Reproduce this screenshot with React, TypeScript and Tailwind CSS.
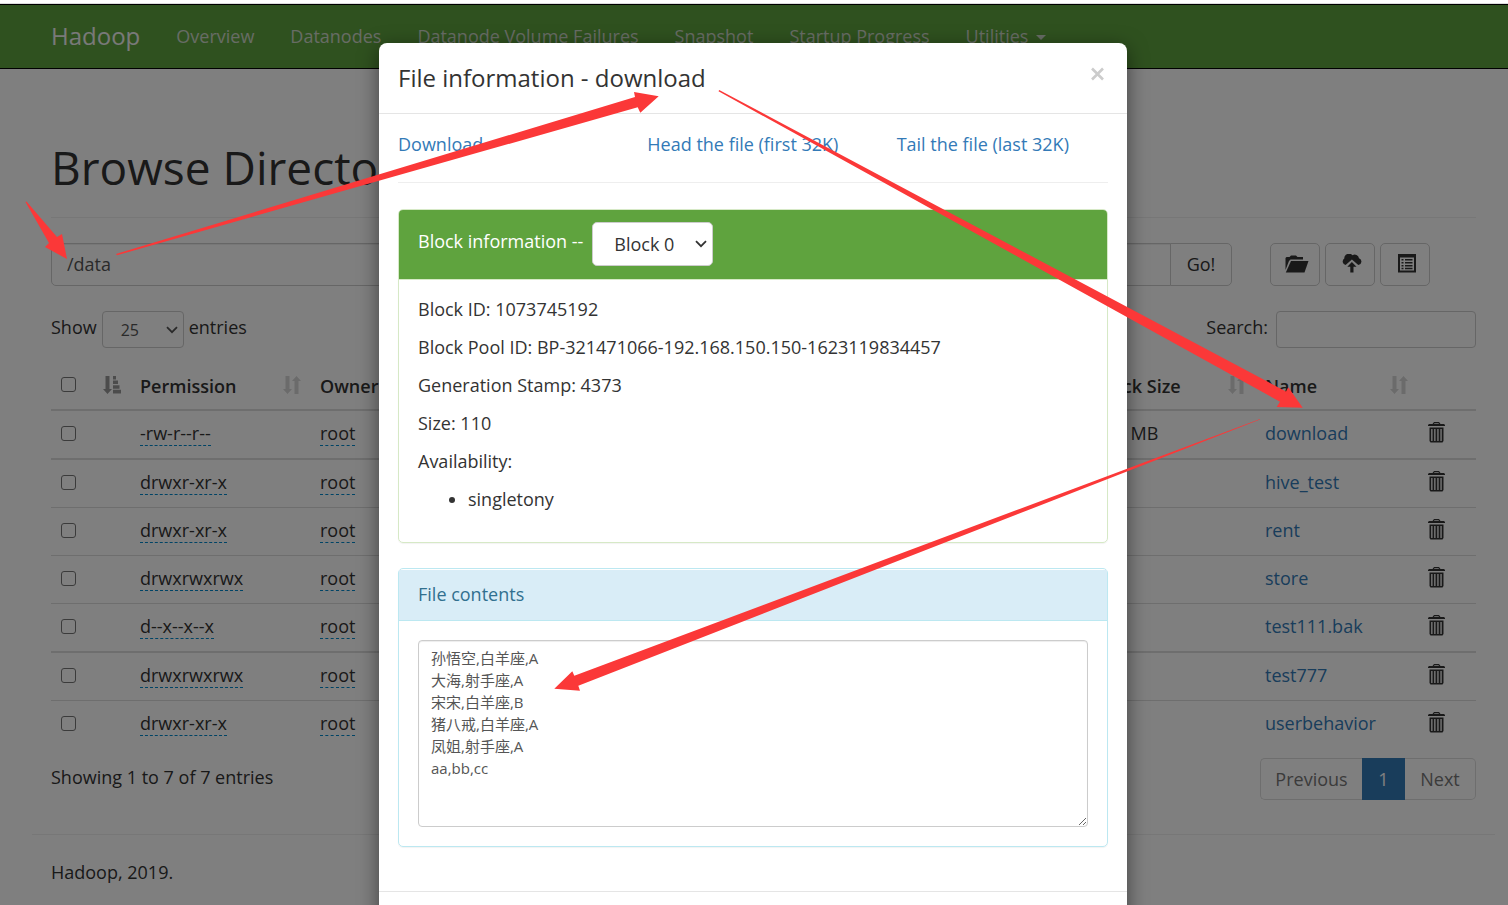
import { useState } from 'react'

type Entry = {
    permission: string
    blockSize: string
    name: string
}

const navItems = ['Overview', 'Datanodes', 'Datanode Volume Failures', 'Snapshot', 'Startup Progress']

const entries: Entry[] = [
    { permission: '-rw-r--r--', blockSize: '128 MB', name: 'download' },
    { permission: 'drwxr-xr-x', blockSize: '', name: 'hive_test' },
    { permission: 'drwxr-xr-x', blockSize: '', name: 'rent' },
    { permission: 'drwxrwxrwx', blockSize: '', name: 'store' },
    { permission: 'd--x--x--x', blockSize: '', name: 'test111.bak' },
    { permission: 'drwxrwxrwx', blockSize: '', name: 'test777' },
    { permission: 'drwxr-xr-x', blockSize: '', name: 'userbehavior' },
]

const fileContents = `孙悟空,白羊座,A
大海,射手座,A
宋宋,白羊座,B
猪八戒,白羊座,A
凤姐,射手座,A
aa,bb,cc`

function SortIcon() {
    return (
        <svg width="18" height="18" viewBox="0 0 18 18" fill="currentColor" aria-hidden="true">
            <path d="M2.500 0h4v13H9l-4.500 5L0 13h2.500z" />
            <path d="M11.500 18h4V5H18l-4.500-5L9 5h2.500z" />
        </svg>
    )
}

function SortedIcon() {
    return (
        <svg width="18" height="18" viewBox="0 0 18 18" fill="currentColor" aria-hidden="true">
            <path d="M2.500 0h4v13H9l-4.500 5L0 13h2.500z" />
            <path d="M10 0h3v3.500h-3zM10 4.500h5V8h-5zM10 9.200h6.500v3.500H10zM10 13.800h8v3.700h-8z" />
        </svg>
    )
}

function TrashIcon() {
    return (
        <svg width="17" height="21" viewBox="0 0 17 21" fill="currentColor" aria-hidden="true">
            <path
                fillRule="evenodd"
                d="M6 0h5l1.500 2H16l1 1v1H0V3l1-1h3.500zM6.500 1.200L6 2h5l-.5-.8zM1.500 5.500h14V19l-1 1.500h-12l-1-1.500zM3.200 7v12h1.300V7zM6.200 7v12h1.300V7zM9.300 7v12h1.300V7zM12.400 7v12h1.300V7z"
            />
        </svg>
    )
}

function FolderOpenIcon() {
    return (
        <svg width="24" height="18" viewBox="0 0 24 18" fill="currentColor" aria-hidden="true">
            <path d="M.5 15V3l1-1h3L6 .5h5L12.500 2H18v2.500H5.500L4 6z" />
            <path d="M6 6h17.500l-4 11.500H.8z" />
        </svg>
    )
}

function CloudUploadIcon() {
    return (
        <svg width="20" height="19" viewBox="0 0 20 19" fill="currentColor" aria-hidden="true">
            <path d="M3.600 11A3.500 3.500 0 0 1 2.300 4.600 4.700 4.700 0 0 1 10.500 1.300a4.300 4.300 0 0 1 6.500 2.900A3.500 3.500 0 0 1 16.300 11L9.900 5.400z" />
            <path d="M9.900 8l4.600 4.800h-3v5.700H8.300v-5.700h-3z" />
        </svg>
    )
}

function ListAltIcon() {
    return (
        <svg width="18" height="19" viewBox="0 0 18 19" fill="currentColor" aria-hidden="true">
            <path
                fillRule="evenodd"
                d="M0 0h18v18.500H0zM2 3.500v13h14v-13zM3.500 5h2v1.500h-2zM7 5h7.500v1.500H7zM3.500 8h2v1.500h-2zM7 8h7.500v1.500H7zM3.500 11h2v1.500h-2zM7 11h7.500v1.500H7zM3.500 13.800h2v1.500h-2zM7 13.800h7.500v1.500H7z"
            />
        </svg>
    )
}

function Chevron() {
    return (
        <svg
            className="pointer-events-none absolute right-1.5 top-1/2 -translate-y-1/2"
            width="12"
            height="8"
            viewBox="0 0 12 8"
            fill="none"
            stroke="currentColor"
            strokeWidth="1.800"
            aria-hidden="true"
        >
            <path d="M1 1.200l5 5 5-5" />
        </svg>
    )
}

function Navbar() {
    return (
        <nav className="flex h-[65px] items-center border-y border-black bg-[#5fa33e] pb-0.5 pl-[51px] whitespace-nowrap">
            <a href="#" className="mr-9 text-2xl text-[#f2f2f2]">
                Hadoop
            </a>
            <div className="flex gap-9 text-[#cfd8ca]">
                {navItems.map((item) => (
                    <a key={item} href="#">
                        {item}
                    </a>
                ))}
                <a href="#" className="flex items-center gap-2">
                    Utilities
                    <svg className="mt-1" width="10" height="5" viewBox="0 0 10 5" fill="currentColor" aria-hidden="true">
                        <path d="M0 0h10L5 5z" />
                    </svg>
                </a>
            </div>
        </nav>
    )
}

function Checkbox({ label }: { label: string }) {
    return (
        <input
            type="checkbox"
            aria-label={label}
            className="block size-[15px] appearance-none rounded-[3px] border border-[#767676] bg-white"
        />
    )
}

function Toolbar() {
    const [path, setPath] = useState('/data')
    const buttonClass =
        'flex h-[43px] w-[50px] items-center justify-center rounded-[5px] border border-[#cccccc] bg-white pb-0.5 pl-[3px]'

    return (
        <div className="flex">
            <input
                aria-label="Directory"
                value={path}
                onChange={(e) => setPath(e.target.value)}
                className="h-[43px] min-w-0 flex-1 rounded-l-[5px] border border-[#cccccc] bg-white px-[15px] pb-0.5 text-[#555555] shadow-[inset_0_1px_1px_rgba(0,0,0,0.075)]"
            />
            <button className="-ml-px h-[43px] w-[62px] rounded-r-[5px] border border-[#cccccc] bg-white pb-0.5">Go!</button>
            <div className="mr-[46px] ml-[38px] flex gap-[5px]">
                <button className={buttonClass} aria-label="Create directory">
                    <FolderOpenIcon />
                </button>
                <button className={buttonClass} aria-label="Upload files">
                    <CloudUploadIcon />
                </button>
                <button className={buttonClass} aria-label="Cut and paste">
                    <ListAltIcon />
                </button>
            </div>
        </div>
    )
}

function HeaderCell({ title }: { title: string }) {
    return (
        <th className="border-b-2 border-[#dddddd] py-[9px] pr-[9px] pl-[10px] font-semibold">
            <div className="flex items-center justify-between whitespace-nowrap">
                {title}
                <span className="pb-1 text-[#d6d6d6]">
                    <SortIcon />
                </span>
            </div>
        </th>
    )
}

function DirectoryTable() {
    return (
        <table className="mt-4 w-full table-fixed border-separate border-spacing-0 text-left leading-[27px]">
            <colgroup>
                <col className="w-[79px]" />
                <col className="w-[180px]" />
                <col className="w-[120px]" />
                <col />
                <col className="w-[170px]" />
                <col className="w-[162px]" />
                <col className="w-[59px]" />
            </colgroup>
            <thead>
                <tr>
                    <th className="border-b-2 border-[#dddddd] py-[9px] pr-[9px] pl-[10px]">
                        <div className="flex items-center justify-between pb-1 text-[#999999]">
                            <Checkbox label="Select all" />
                            <SortedIcon />
                        </div>
                    </th>
                    <HeaderCell title="Permission" />
                    <HeaderCell title="Owner" />
                    <th className="border-b-2 border-[#dddddd]"></th>
                    <HeaderCell title="Block Size" />
                    <HeaderCell title="Name" />
                    <th className="border-b-2 border-[#dddddd]"></th>
                </tr>
            </thead>
            <tbody className="[&_td]:border-[#dddddd] [&_td]:px-[10px] [&_td]:pt-[9px] [&_td]:pb-[11px] [&_tr:not(:last-child)_td]:border-b [&_tr:nth-child(4n+1)_td]:border-b-2">
                {entries.map((entry) => (
                    <tr key={entry.name}>
                        <td>
                            <Checkbox label={entry.name} />
                        </td>
                        <td>
                            <span className="border-b border-dashed border-[#0088cc]">{entry.permission}</span>
                        </td>
                        <td>
                            <span className="border-b border-dashed border-[#0088cc]">root</span>
                        </td>
                        <td></td>
                        <td>{entry.blockSize}</td>
                        <td>
                            <a href="#" className="text-[#337ab7]">
                                {entry.name}
                            </a>
                        </td>
                        <td>
                            <button className="ml-px block pb-[3px]" aria-label={`Delete ${entry.name}`}>
                                <TrashIcon />
                            </button>
                        </td>
                    </tr>
                ))}
            </tbody>
        </table>
    )
}

function BrowsePage() {
    return (
        <div className="flex-1 bg-white">
            <Navbar />
            <main className="pt-[66px] pr-8 pl-[51px]">
                <h1 className="text-[46px] leading-[64px]">Browse Directory</h1>
                <hr className="mt-[18px] mb-[25px] border-[#eeeeee]" />
                <Toolbar />
                <div className="mt-[25px] flex justify-between">
                    <label className="flex gap-[5px] leading-[32px]">
                        Show
                        <span className="relative text-[#555555]">
                            <select
                                defaultValue="25"
                                className="h-[37px] w-[82px] appearance-none rounded border border-[#cccccc] bg-white px-[18px] text-base"
                            >
                                <option>25</option>
                                <option>50</option>
                                <option>100</option>
                            </select>
                            <Chevron />
                        </span>
                        entries
                    </label>
                    <label className="flex gap-2 leading-[32px]">
                        Search:
                        <input
                            type="search"
                            className="h-[37px] w-[200px] rounded border border-[#cccccc] bg-white px-3 text-base"
                        />
                    </label>
                </div>
                <DirectoryTable />
                <div className="mt-[10px] flex justify-between">
                    <p className="pt-1.5 leading-[27px]">Showing 1 to 7 of 7 entries</p>
                    <div className="flex text-[#777777]">
                        <button className="h-[42px] w-[102px] rounded-l-[5px] border border-r-0 border-[#dddddd]">Previous</button>
                        <button className="h-[42px] w-[43px] bg-[#337ab7] text-white">1</button>
                        <button className="h-[42px] w-[71px] rounded-r-[5px] border border-l-0 border-[#dddddd]">Next</button>
                    </div>
                </div>
            </main>
            <footer className="mt-[34px] mr-[13px] ml-8 border-t border-[#eeeeee] pt-6 pl-[19px] leading-[27px]">
                Hadoop, 2019.
            </footer>
        </div>
    )
}

function FileModal() {
    const [contents, setContents] = useState(fileContents)

    return (
        <div
            role="dialog"
            aria-labelledby="file-title"
            className="w-[748px] shrink-0 rounded-t-lg bg-white shadow-[0_5px_20px_rgba(0,0,0,0.5)]"
        >
            <div className="flex justify-between border-b border-[#e5e5e5] px-[19px] py-[18px]">
                <h4 id="file-title" className="text-2xl leading-[34px]">
                    File information - download
                </h4>
                <button className="flex h-[26px] items-center text-[#cccccc]" aria-label="Close">
                    <svg width="20" height="14" viewBox="0 0 20 14" stroke="currentColor" strokeWidth="2.600" aria-hidden="true">
                        <path d="M4 1.500l11 11M15 1.500L4 12.500" />
                    </svg>
                </button>
            </div>
            <div className="border-b border-[#e5e5e5] px-[19px] pt-[17px] pb-11">
                <div className="grid grid-cols-3 gap-x-[38px] leading-[27px] whitespace-nowrap text-[#337ab7]">
                    <a href="#">Download</a>
                    <a href="#">Head the file (first 32K)</a>
                    <a href="#">Tail the file (last 32K)</a>
                </div>
                <hr className="mt-6 mb-[26px] border-[#eeeeee]" />

                <section className="rounded-[5px] border border-[#d6e9c6] shadow-[0_1px_1px_rgba(0,0,0,0.05)]">
                    <div className="flex h-[70px] gap-[9px] rounded-t border-b border-[#d6e9c6] bg-[#5fa33e] px-[19px] pt-3 text-white">
                        <label htmlFor="block" className="leading-[38px] font-medium">
                            Block information --
                        </label>
                        <span className="relative h-11 text-[#333333]">
                            <select
                                id="block"
                                defaultValue="Block 0"
                                className="h-11 w-[121px] appearance-none rounded-[5px] border border-[#cccccc] bg-white px-[21px]"
                            >
                                <option>Block 0</option>
                            </select>
                            <Chevron />
                        </span>
                    </div>
                    <div className="flex flex-col gap-3 px-[19px] pt-4 pb-[30px] leading-[26px]">
                        <p>Block ID: 1073745192</p>
                        <p>Block Pool ID: BP-321471066-192.168.150.150-1623119834457</p>
                        <p>Generation Stamp: 4373</p>
                        <p>Size: 110</p>
                        <p>Availability:</p>
                        <ul className="list-disc pl-[50px]">
                            <li>singletony</li>
                        </ul>
                    </div>
                </section>

                <section className="mt-[25px] rounded-[5px] border border-[#bce8f1] shadow-[0_1px_1px_rgba(0,0,0,0.05)]">
                    <h5 className="mt-px border-b border-[#bce8f1] bg-[#d9edf7] px-[19px] pt-[11px] pb-3 leading-[27px] text-[#31708f]">
                        File contents
                    </h5>
                    <div className="p-[19px]">
                        <textarea
                            aria-label="File contents"
                            value={contents}
                            onChange={(e) => setContents(e.target.value)}
                            className="block h-[187px] w-full rounded border border-[#cccccc] px-3 py-1.5 text-[15px] leading-[22px] text-[#555555] shadow-[inset_0_1px_1px_rgba(0,0,0,0.075)]"
                        />
                    </div>
                </section>
            </div>
            <div className="h-20" />
        </div>
    )
}

// Hand-drawn arrows that point out the steps over the page
function Arrows() {
    return (
        <svg
            className="pointer-events-none absolute top-0 left-0"
            width="1508"
            height="905"
            viewBox="0 0 1508 905"
            fill="#fb3838"
            aria-hidden="true"
        >
            <path d="M25.500 202L26.500 201.500L57 237l5-3 5 25-22-12 4-4z" />
            <path d="M116 254L635 97l-1-5 24.700 4.300L640.300 112.700l-2.600-5.400L117 255.200z" />
            <path d="M718.500 91.300L719.200 90L1286 391.500l2.300-4.200 14.400 20.400-26-.7 3.300-5.300z" />
            <path d="M1260 419L574.300 675.700l-2-4.400-18 17.400 25.700 2-1.700-5L1260 419.600z" />
        </svg>
    )
}

export default function App() {
    return (
        <div className="relative flex min-h-screen flex-col overflow-hidden font-['Open_Sans','Noto_Sans_CJK_SC',sans-serif] text-lg text-[#333333]">
            <div className="h-1 border-b border-[#dddddd] bg-white" />
            <div className="relative flex flex-1 flex-col">
                <BrowsePage />
                <div className="absolute inset-0 flex items-start justify-center overflow-hidden bg-black/50 pt-[39px] pr-0.5">
                    <FileModal />
                </div>
            </div>
            <Arrows />
        </div>
    )
}
